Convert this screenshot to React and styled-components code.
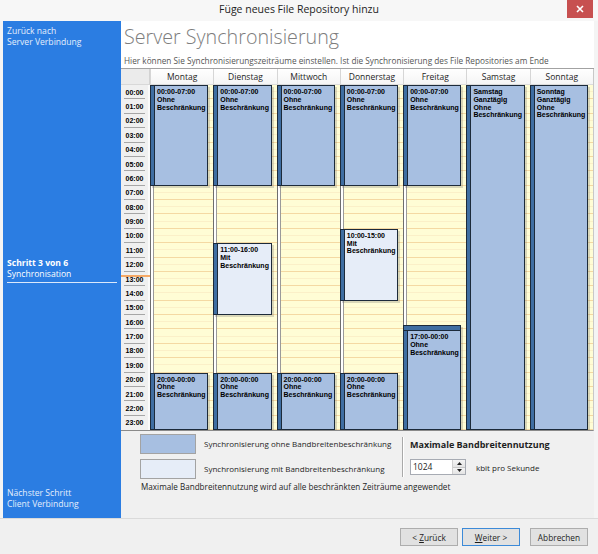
import React from "react";
import styled, { createGlobalStyle } from "styled-components";

const H = 345 / 24;

const GlobalStyle = createGlobalStyle`
  html, body { margin: 0; padding: 0; background: #f4f4f4; }
  body { font-family: "Open Sans", "Noto Sans", sans-serif; }
  * { box-sizing: border-box; }
`;

const Window = styled.div`
  width: 598px;
  height: 554px;
  display: flex;
  flex-direction: column;
  background: #f4f4f4;
  overflow: hidden;
`;

const TitleBar = styled.div`
  height: 21px;
  flex: none;
  display: grid;
  grid-template-columns: 1fr auto 1fr;
  align-items: start;
  background: #f7f7f7;
`;

const TitleText = styled.div`
  grid-column: 2;
  font-size: 10.5px;
  line-height: 19px;
  color: #1e1e1e;
`;

const CloseButton = styled.div`
  grid-column: 3;
  justify-self: end;
  margin-right: 5px;
  width: 26px;
  height: 18px;
  background: #c75050;
  display: flex;
  align-items: center;
  justify-content: center;
`;

const Body = styled.div`
  flex: 1;
  display: flex;
  padding: 0 4px 0 3px;
  min-height: 0;
`;

const Sidebar = styled.div`
  width: 118px;
  flex: none;
  background: #2b7de2;
  color: #fff;
  display: flex;
  flex-direction: column;
  padding: 5px 4px 8px 4px;
  font-size: 8.6px;
  line-height: 11px;
`;

const SideBlock = styled.div`
  color: ${(p) => (p.$dim ? "#e4eefc" : "#fff")};
`;

const SideCurrent = styled.div`
  margin-top: 210px;
  width: 110px;
  padding-bottom: 2px;
  border-bottom: 1px solid #dbe8fb;
`;

const SideStrong = styled.div`
  font-weight: 700;
`;

const SideNext = styled.div`
  margin-top: auto;
  color: #e4eefc;
`;

const Main = styled.div`
  flex: 1;
  display: flex;
  flex-direction: column;
  background: #f0f0f0;
  min-width: 0;
`;

const Header = styled.div`
  height: 48px;
  flex: none;
  background: #fff;
  border-bottom: 1px solid #a2a2a2;
  padding: 3px 0 0 3px;
  overflow: hidden;
`;

const PageTitle = styled.div`
  font-size: 19.7px;
  font-weight: 300;
  color: #7d7d7d;
  line-height: 26px;
  white-space: nowrap;
`;

const PageSub = styled.div`
  font-size: 8.25px;
  line-height: 12px;
  margin-top: 5px;
  color: #555;
  white-space: nowrap;
`;

const Calendar = styled.div`
  flex: none;
  height: 362px;
  display: grid;
  grid-template-columns: 29px repeat(7, 1fr);
  grid-template-rows: 16px 345px;
  border-right: 1px solid #c8c8c8;
  border-bottom: 1px solid #8a8a8a;
  background: #f0f0f0;
`;

const Corner = styled.div`
  background: #ebebeb;
  border-right: 1px solid #d2d2d2;
  border-bottom: 1px solid #d8d8d8;
`;

const DayHead = styled.div`
  background: linear-gradient(#ffffff, #f5f5f5);
  border-left: 1px solid #d6d6d6;
  border-bottom: 1px solid #dcdcdc;
  font-size: 8.5px;
  line-height: 15px;
  color: #1e1e1e;
  text-align: center;
`;

const TimeColumn = styled.div`
  position: relative;
  display: flex;
  flex-direction: column;
  background: #f0f0f0;
  border-right: 2px solid #fafafa;
`;

const TimeSlot = styled.div`
  height: ${H}px;
  flex: none;
  display: flex;
  align-items: center;
  justify-content: center;
  font: bold 7px "Liberation Sans", Arial, sans-serif;
  color: #000;
  background: ${(p) =>
    p.$last
      ? "none"
      : "linear-gradient(#a6a6a6,#a6a6a6) no-repeat center bottom / 21px 1px"};
`;

const NowLine = styled.div`
  position: absolute;
  left: 0;
  right: -2px;
  top: 190px;
  height: 2px;
  background: #f5a865;
`;

const DayColumn = styled.div`
  position: relative;
  overflow: hidden;
  background-color: #fffdd5;
  background-image: linear-gradient(
      to right,
      #6e6e6e 0 1px,
      #ffffff 1px 3px,
      #9a9a9a 3px 4px,
      transparent 4px
    ),
    repeating-linear-gradient(
      to bottom,
      transparent 0 ${H - 1}px,
      #f4d9a3 ${H - 1}px ${H}px
    ),
    repeating-linear-gradient(
      to bottom,
      transparent 0 ${H / 2 - 1}px,
      #fbf0c8 ${H / 2 - 1}px ${H / 2}px
    );
`;

const EventBox = styled.div`
  position: absolute;
  left: 0;
  width: calc(100% - 5px);
  background: ${(p) => (p.$limited ? "#e6edf8" : "#a7bfe1")};
  border: 1px solid #1c2a3a;
  padding: ${(p) => (p.$selected ? "7px" : "2px")} 2px 0 6px;
  box-shadow: 2px 2px 0 rgba(80, 80, 80, 0.22);
  font: bold 7px/7.8px "Liberation Sans", Arial, sans-serif;
  color: #000;
  &::before {
    content: "";
    position: absolute;
    left: 0;
    top: 0;
    bottom: 0;
    width: 3px;
    background: #3f6ea2;
    border-right: 1px solid #1c2a3a;
  }
  &::after {
    content: "";
    display: ${(p) => (p.$selected ? "block" : "none")};
    position: absolute;
    left: 0;
    right: 0;
    top: 0;
    height: 4px;
    background: #3f6ea2;
    border-bottom: 1px solid #1c2a3a;
  }
`;

const BottomPanel = styled.div`
  flex: 1;
  background: #f0f0f0;
  padding: 3px 0 0 19px;
  display: flex;
  flex-direction: column;
  font-size: 8px;
  color: #1e1e1e;
`;

const PanelRow = styled.div`
  display: flex;
  align-items: flex-start;
`;

const LegendList = styled.div`
  width: 262px;
  display: flex;
  flex-direction: column;
  gap: 5px;
`;

const LegendItem = styled.div`
  display: flex;
  align-items: center;
  gap: 8px;
  line-height: 12px;
`;

const Swatch = styled.div`
  width: 56px;
  height: 20px;
  flex: none;
  background: ${(p) => p.$color};
  border: 1px solid #a3a3a3;
`;

const VDivider = styled.div`
  width: 1px;
  height: 40px;
  margin-top: 3px;
  background: #a9a9a9;
  box-shadow: 1px 0 0 #fff;
`;

const Bandwidth = styled.div`
  margin-left: 7px;
  display: flex;
  flex-direction: column;
`;

const BandTitle = styled.div`
  font-size: 9px;
  font-weight: 700;
  line-height: 12px;
  margin-top: 5px;
`;

const SpinRow = styled.div`
  display: flex;
  align-items: center;
  gap: 10px;
  margin-top: 8px;
`;

const SpinBox = styled.div`
  width: 56px;
  height: 16px;
  background: #fff;
  border: 1px solid #a7abb3;
  display: flex;
  align-items: stretch;
  font-size: 8.5px;
`;

const SpinValue = styled.div`
  flex: 1;
  padding-left: 2px;
  line-height: 14px;
`;

const SpinButtons = styled.div`
  width: 13px;
  display: flex;
  flex-direction: column;
  border-left: 1px solid #d0d0d0;
`;

const SpinBtn = styled.div`
  flex: 1;
  display: flex;
  align-items: center;
  justify-content: center;
  background: linear-gradient(#f4f4f4, #e4e4e4);
  border-top: ${(p) => (p.$down ? "1px solid #c8c8c8" : "none")};
`;

const Note = styled.div`
  margin-top: 2px;
  margin-left: 1px;
  line-height: 12px;
  font-size: 8.15px;
`;

const Footer = styled.div`
  height: 36px;
  flex: none;
  border-top: 1px solid #dadada;
  background: #f0f0f0;
  display: flex;
  justify-content: flex-end;
  align-items: flex-start;
  padding: 9px 10px 0 0;
`;

const Button = styled.div`
  width: 58px;
  height: 18px;
  margin-left: ${(p) => p.$gap || 0}px;
  background: #e1e1e1;
  border: 1px solid ${(p) => (p.$default ? "#3c8ad8" : "#adadad")};
  display: flex;
  align-items: center;
  justify-content: center;
  font-size: 8.3px;
  color: #1e1e1e;
  & u {
    text-decoration: underline;
  }
`;

const TOP_LABEL = ["00:00-07:00", "Ohne", "Beschränkung"];
const EVE_LABEL = ["20:00-00:00", "Ohne", "Beschränkung"];

const days = [
  { name: "Montag", events: [{ s: 0, e: 7, t: TOP_LABEL }, { s: 20, e: 24, t: EVE_LABEL }] },
  {
    name: "Dienstag",
    events: [
      { s: 0, e: 7, t: TOP_LABEL },
      { s: 11, e: 16, t: ["11:00-16:00", "Mit", "Beschränkung"], limited: true },
      { s: 20, e: 24, t: EVE_LABEL },
    ],
  },
  { name: "Mittwoch", events: [{ s: 0, e: 7, t: TOP_LABEL }, { s: 20, e: 24, t: EVE_LABEL }] },
  {
    name: "Donnerstag",
    events: [
      { s: 0, e: 7, t: TOP_LABEL },
      { s: 10, e: 15, t: ["10:00-15:00", "Mit", "Beschränkung"], limited: true },
      { s: 20, e: 24, t: EVE_LABEL },
    ],
  },
  {
    name: "Freitag",
    events: [
      { s: 0, e: 7, t: TOP_LABEL },
      { s: 17, e: 24, t: ["17:00-00:00", "Ohne", "Beschränkung"], selected: true },
    ],
  },
  { name: "Samstag", events: [{ s: 0, e: 24, t: ["Samstag", "Ganztägig", "Ohne", "Beschränkung"] }] },
  { name: "Sonntag", events: [{ s: 0, e: 24, t: ["Sonntag", "Ganztägig", "Ohne", "Beschränkung"] }] },
];

const hours = Array.from({ length: 24 }, (_, i) => `${String(i).padStart(2, "0")}:00`);

function Arrow({ down }) {
  return (
    <svg width="5" height="3" viewBox="0 0 5 3">
      <path d={down ? "M0 0H5L2.5 3Z" : "M0 3H5L2.5 0Z"} fill="#222" />
    </svg>
  );
}

export default function App() {
  return (
    <>
      <GlobalStyle />
      <Window>
        <TitleBar>
          <TitleText>Füge neues File Repository hinzu</TitleText>
          <CloseButton>
            <svg width="8" height="8" viewBox="0 0 8 8">
              <path d="M1 1L7 7M7 1L1 7" stroke="#fff" strokeWidth="1.6" />
            </svg>
          </CloseButton>
        </TitleBar>
        <Body>
          <Sidebar>
            <SideBlock $dim>
              Zurück nach
              <br />
              Server Verbindung
            </SideBlock>
            <SideCurrent>
              <SideStrong>Schritt 3 von 6</SideStrong>
              <div>Synchronisation</div>
            </SideCurrent>
            <SideNext>
              Nächster Schritt
              <br />
              Client Verbindung
            </SideNext>
          </Sidebar>
          <Main>
            <Header>
              <PageTitle>Server Synchronisierung</PageTitle>
              <PageSub>
                Hier können Sie Synchronisierungszeiträume einstellen. Ist die Synchronisierung des File
                Repositories am Ende
              </PageSub>
            </Header>
            <Calendar>
              <Corner />
              {days.map((d) => (
                <DayHead key={d.name}>{d.name}</DayHead>
              ))}
              <TimeColumn>
                {hours.map((h, i) => (
                  <TimeSlot key={h} $last={i === 23}>
                    {h}
                  </TimeSlot>
                ))}
                <NowLine />
              </TimeColumn>
              {days.map((d) => (
                <DayColumn key={d.name}>
                  {d.events.map((ev, i) => {
                    const top = ev.s * H - (ev.selected ? 4 : 0);
                    const height = (ev.e - ev.s) * H + (ev.selected ? 4 : 0);
                    return (
                      <EventBox
                        key={i}
                        $limited={ev.limited}
                        $selected={ev.selected}
                        style={{ top: `${top}px`, height: `${height}px` }}
                      >
                        {ev.t.map((line) => (
                          <div key={line}>{line}</div>
                        ))}
                      </EventBox>
                    );
                  })}
                </DayColumn>
              ))}
            </Calendar>
            <BottomPanel>
              <PanelRow>
                <LegendList>
                  <LegendItem>
                    <Swatch $color="#a7bfe1" />
                    Synchronisierung ohne Bandbreitenbeschränkung
                  </LegendItem>
                  <LegendItem>
                    <Swatch $color="#e6edf8" />
                    Synchronisierung mit Bandbreitenbeschränkung
                  </LegendItem>
                </LegendList>
                <VDivider />
                <Bandwidth>
                  <BandTitle>Maximale Bandbreitennutzung</BandTitle>
                  <SpinRow>
                    <SpinBox>
                      <SpinValue>1024</SpinValue>
                      <SpinButtons>
                        <SpinBtn>
                          <Arrow />
                        </SpinBtn>
                        <SpinBtn $down>
                          <Arrow down />
                        </SpinBtn>
                      </SpinButtons>
                    </SpinBox>
                    <span>kbit pro Sekunde</span>
                  </SpinRow>
                </Bandwidth>
              </PanelRow>
              <Note>Maximale Bandbreitennutzung wird auf alle beschränkten Zeiträume angewendet</Note>
            </BottomPanel>
          </Main>
        </Body>
        <Footer>
          <Button>
            &lt;&nbsp;<u>Z</u>urück
          </Button>
          <Button $default $gap={4}>
            <u>W</u>eiter &gt;
          </Button>
          <Button $gap={10}>Abbrechen</Button>
        </Footer>
      </Window>
    </>
  );
}
